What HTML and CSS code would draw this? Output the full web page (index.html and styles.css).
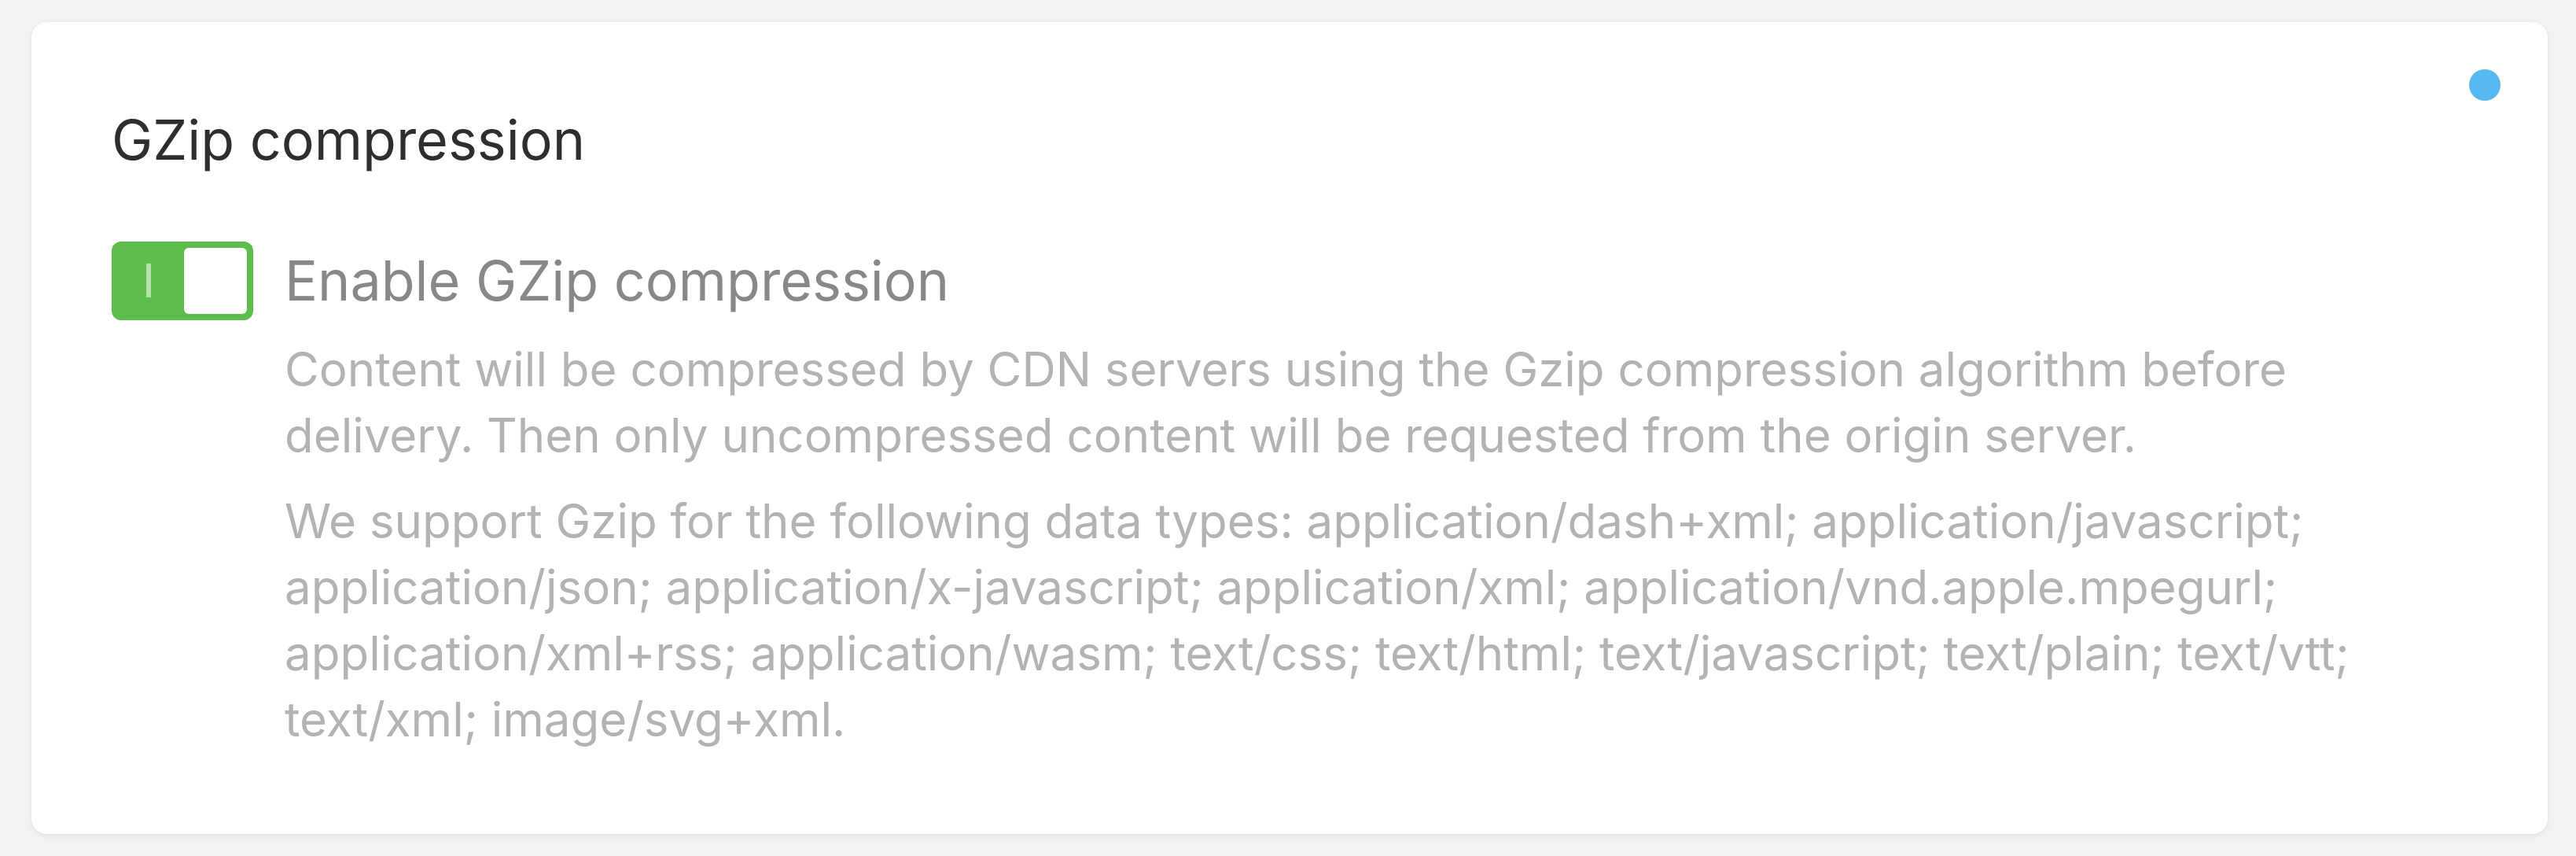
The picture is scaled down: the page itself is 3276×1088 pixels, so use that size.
FILE: index.html
```html
<!DOCTYPE html>
<html>
<head>
    <title>GZip compression</title>
    <link rel="stylesheet" href="styles.css">
</head>
<body>
    <div class="card">
        <span class="status-dot"></span>
        <h2 class="card-title">GZip compression</h2>
        <div class="option">
            <label class="switch">
                <span class="switch-mark"></span>
                <span class="switch-knob"></span>
            </label>
            <div class="option-body">
                <div class="option-label">Enable GZip compression</div>
                <p class="option-help">Content will be compressed by CDN servers using the Gzip compression algorithm before delivery. Then only uncompressed content will be requested from the origin server.</p>
                <p class="option-help">We support Gzip for the following data types: application/dash+xml; application/javascript; application/json; application/x-javascript; application/xml; application/vnd.apple.mpegurl; application/xml+rss; application/wasm; text/css; text/html; text/javascript; text/plain; text/vtt; text/xml; image/svg+xml.</p>
            </div>
        </div>
    </div>
</body>
</html>
```

FILE: styles.css
```css
body {
    margin: 0;
    padding: 28px 36px 28px 40px;
    background: #f2f2f2;
    font-family: Inter, "Noto Sans", sans-serif;
}
.card {
    position: relative;
    background: #fff;
    border-radius: 20px;
    box-shadow: 0 2px 6px rgba(0, 0, 0, 0.07);
    padding: 110px 102px 102px 102px;
    height: 1032px;
    box-sizing: border-box;
}
.status-dot {
    position: absolute;
    top: 60px;
    right: 60px;
    width: 40px;
    height: 40px;
    border-radius: 50%;
    background: #56b9f0;
}
.card-title {
    margin: 0;
    font-size: 70px;
    line-height: 80px;
    font-weight: 400;
    color: #2e2e2e;
}
.option {
    display: flex;
    gap: 40px;
    margin-top: 89px;
}
.switch {
    position: relative;
    flex: none;
    width: 180px;
    height: 100px;
    border-radius: 12px;
    background: #5cbd4b;
}
.switch-mark {
    position: absolute;
    left: 44px;
    top: 28px;
    width: 6px;
    height: 43px;
    background: rgba(255, 255, 255, 0.55);
}
.switch-knob {
    position: absolute;
    right: 8px;
    top: 8px;
    width: 80px;
    height: 84px;
    border-radius: 6px;
    background: #fff;
}
.option-body {
    flex: 1;
}
.option-label {
    font-size: 70px;
    line-height: 100px;
    color: #888;
}
.option-help {
    margin: 20px 0 0;
    font-size: 60px;
    line-height: 84px;
    color: #b3b3b3;
    max-width: 2700px;
}
.option-help + .option-help {
    margin-top: 25px;
}
```
